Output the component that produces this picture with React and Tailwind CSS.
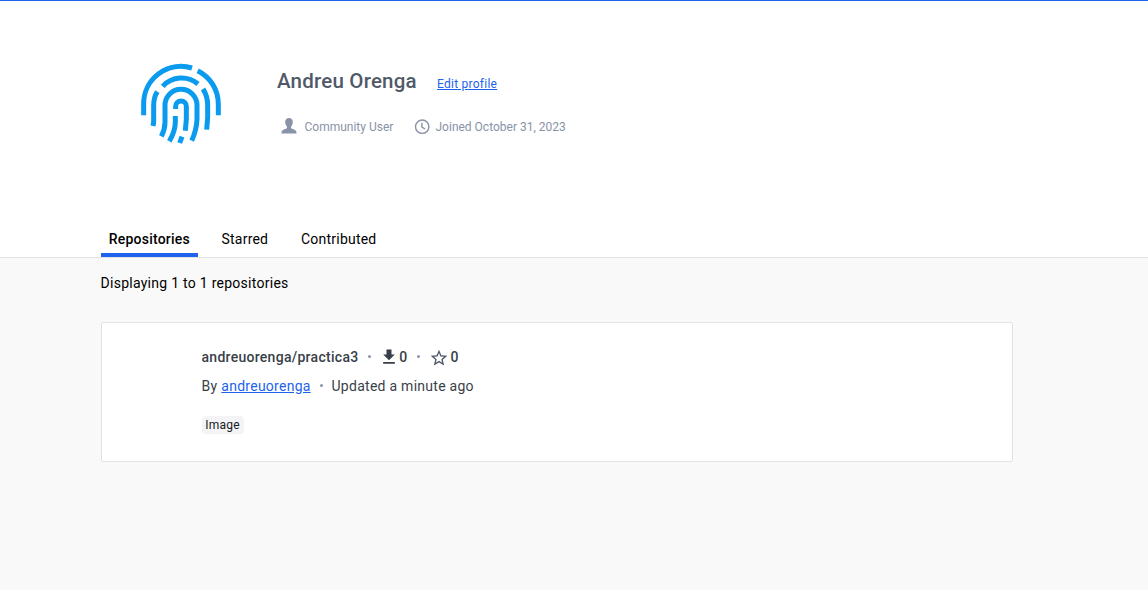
import { MdDownload, MdStarBorder } from "react-icons/md";

function Fingerprint() {
  return (
    <svg className="size-[100px] shrink-0" viewBox="0 0 300 300" fill="none" stroke="#0a9bee" strokeWidth="15">
      <path d="M41 184V150A112 112 0 0 1 186 42" />
      <path d="M203 50A112 112 0 0 1 265 150V184" />
      <path d="M98 97A77 77 0 0 1 204 90" />
      <path d="M82 113Q71 130 71 155V204L69 216" />
      <path d="M219 105Q233 126 233 155V190L230 227" />
      <path d="M94 247Q105 226 105 204V154A48 48 0 0 1 201 154V195Q200 228 185 260" />
      <path d="M137 165V157A16 16 0 0 1 169 157V196L166 230" />
      <path d="M136 186V204Q136 230 118 262" />
      <path d="M156 248L149 267" />
    </svg>
  );
}

function UserIcon() {
  return (
    <svg className="-ml-[0.5px] mb-px mr-[0.5px] size-4 shrink-0" viewBox="0 0 16 16" fill="#8993a8">
      <path d="M8 0C5.5 0 4.1 1.7 4.2 4C4.3 6.2 5 7.6 6 8.5V10C5.5 11 1.3 11.4.7 13.5L.4 15.6H15.6L15.3 13.5C14.7 11.4 10.5 11 10 10V8.5C11 7.6 11.7 6.2 11.8 4C11.9 1.7 10.5 0 8 0Z" />
    </svg>
  );
}

function ClockIcon() {
  return (
    <svg className="size-4 shrink-0" viewBox="0 0 16 16" fill="none" stroke="#8993a8" strokeWidth="1.4">
      <circle cx="8.2" cy="7.7" r="6.7" />
      <path d="M7.9 3.8V8L11.1 10" />
    </svg>
  );
}

function Dot() {
  return <span className="mb-px size-[3px] shrink-0 rounded-full bg-[#8993a8]" />;
}

export default function App() {
  return (
    <div className="h-[590px] border-t border-[#1d63ed] bg-[#f9f9f9] font-['Roboto',sans-serif] text-black">
      <header className="h-[257px] border-b border-[#e1e2e6] bg-white">
        <div className="flex h-[217px] pl-[130px] pt-[53px]">
          <Fingerprint />
          <div className="ml-[47px] pt-3">
            <div className="flex items-baseline">
              <h1 className="w-[160px] whitespace-nowrap text-[20.5px]/[30px] font-medium tracking-[0.2px] text-[#505968]">Andreu Orenga</h1>
              <a href="#" className="text-xs tracking-[0.25px] text-[#1d63ed] underline">Edit profile</a>
            </div>
            <div className="mt-[22px] flex items-center whitespace-nowrap pl-[4px] text-xs/[16px] text-[#8993a8]">
              <UserIcon />
              <span className="ml-[7.5px] w-[109.5px] pt-px">Community User</span>
              <ClockIcon />
              <span className="ml-[5.5px] pt-px">Joined October 31, 2023</span>
            </div>
          </div>
        </div>
        <nav className="flex h-[39px] pl-[101px] text-sm/[42px] tracking-[0.22px]">
          <a href="#" className="w-[97px] border-b-4 border-[#1d63ed] pl-[7.75px] font-medium">Repositories</a>
          <a href="#" className="ml-[23.5px] w-[79.5px]">Starred</a>
          <a href="#">Contributed</a>
        </nav>
      </header>
      <main className="pl-[101px] pt-[15px]">
        <p className="-ml-[0.5px] text-sm/[20px] tracking-[0.27px]">Displaying 1 to 1 repositories</p>
        <section className="mt-[29px] h-[140px] w-[912px] rounded-[2px] border border-[#e1e2e6] bg-white pl-[99.5px] pt-6 text-sm text-[#393f49]">
          <div className="flex h-5 items-center font-medium">
            <span className="w-[166px] tracking-[0.28px]">andreuorenga/practica3</span>
            <Dot />
            <MdDownload className="ml-[8px] size-5" />
            <span className="ml-[0.75px] w-[17.25px]">0</span>
            <Dot />
            <MdStarBorder className="ml-[9.5px] mt-px size-5 text-[#505968]" />
            <span className="ml-[1.5px]">0</span>
          </div>
          <div className="mt-[9px] flex h-5 items-center tracking-[0.27px]">
            <span className="w-[19.75px]">By</span>
            <a href="#" className="w-[98.25px] text-[#1d63ed] underline">andreuorenga</a>
            <Dot />
            <span className="ml-[9px]">Updated a minute ago</span>
          </div>
          <span className="ml-[0.5px] mt-5 flex h-[18px] w-[42px] items-center rounded bg-[#f4f4f6] pl-[3.25px] text-xs tracking-[0.25px] text-[#17191e]">Image</span>
        </section>
      </main>
    </div>
  );
}
